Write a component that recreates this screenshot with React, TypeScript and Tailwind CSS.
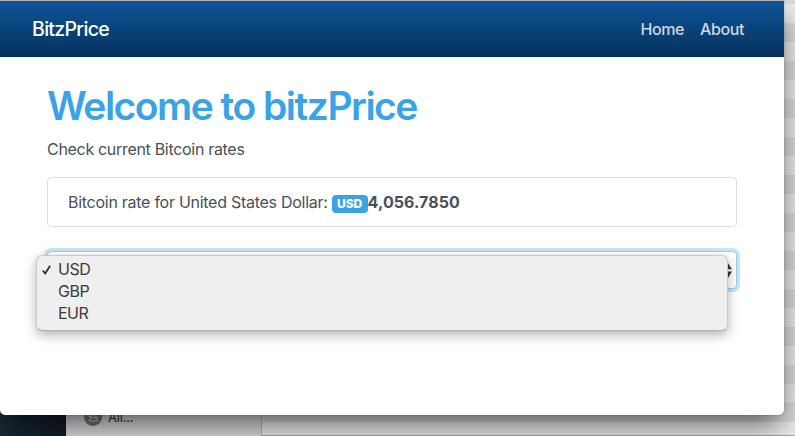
const options = ['USD', 'GBP', 'EUR'];

function Desktop() {
  return (
    <div className="absolute inset-0 flex bg-[#e3e3e3]">
      <div className="w-[66px] bg-[linear-gradient(to_right,#182c36,#121b26)]" />
      <div className="flex w-[195px] items-end bg-[#dedede] pb-[6px]">
        <div className="flex h-[27px] items-center gap-[6px] pl-[18px]">
          <svg width="18" height="18" viewBox="0 0 18 18">
            <circle cx="9" cy="9" r="9" fill="#747474" />
            <path
              d="M3 7l5 3 6-1M9 4l-4 9M9 4l5 9M5 13h9M4 5l3 2"
              fill="none"
              stroke="#d0d0d0"
              strokeWidth="1"
            />
          </svg>
          <span className="text-[13px] leading-[18px] tracking-[-0.2px] text-[#303030]">All...</span>
        </div>
      </div>
      <div className="flex-1 border-l border-[#bababa] border-b border-b-[#a8a8a8] bg-[repeating-linear-gradient(to_bottom,#dedede_0px,#dedede_19px,#eeeeee_19px,#eeeeee_38px)] bg-[position:0_-15px] bg-[size:100%_600px]" />
    </div>
  );
}

function Navbar() {
  return (
    <nav className="flex h-[57px] items-center justify-between border-t border-[#b4b4b4] bg-[linear-gradient(to_bottom,#0d5499,#05325c)] pr-10 pl-8">
      <span className="text-[19.5px] leading-[30px] font-medium tracking-[-0.68px] text-white">BitzPrice</span>
      <div className="flex gap-4 text-[16px] leading-6 font-medium tracking-[-0.4px] text-[#cbd7e2]">
        <span>Home</span>
        <span>About</span>
      </div>
    </nav>
  );
}

function CurrencySelect() {
  return (
    <div className="relative mt-6 h-[38px] w-[690px] rounded-[4px] border border-[#98cff1] bg-white shadow-[0_0_0_3px_#c8e4f6]">
      <svg className="absolute top-[11px] right-[4px]" width="8" height="15" viewBox="0 0 8 15">
        <path d="M0 6.2 4 0l4 6.2zM0 8.5h8L4 15z" fill="#343a40" />
      </svg>
      <div className="absolute top-[3px] -left-[12px] h-[76px] w-[692px] rounded-[6px] border border-[#c9c9c9] border-b-[#b0b0b0] bg-[#efefef] pt-[2px] shadow-[0_4px_12px_rgba(0,0,0,0.3)]">
        {options.map((option, index) => (
          <div key={option} className="flex h-[22px] items-center pl-[5px]">
            <span className="flex w-4 pt-[2px]">
              {index === 0 && (
                <svg width="9" height="10" viewBox="0 0 9 10">
                  <path d="M.8 5.5 3.2 8.4 8.1.8" fill="none" stroke="#303030" strokeWidth="1.8" />
                </svg>
              )}
            </span>
            <span className="text-[16px] tracking-[-0.5px] text-[#3b3b3b]">{option}</span>
          </div>
        ))}
      </div>
    </div>
  );
}

export default function App() {
  return (
    <div className="relative h-[436px] w-[795px] overflow-hidden font-['Inter','Liberation_Sans',sans-serif]">
      <Desktop />
      <div className="absolute top-0 left-0 h-[415px] w-[784px] rounded-b-[5px] bg-white shadow-[0_0_1px_rgba(0,0,0,0.65),0_14px_32px_rgba(0,0,0,0.38),0_12px_22px_-8px_rgba(0,0,0,0.34)]">
        <Navbar />
        <main className="pl-[47px] text-[#495057]">
          <h1 className="pt-[25px] text-[39px] leading-[48px] font-[560] tracking-[-1.5px] text-[#3aa3e6]">
            Welcome to bitzPrice
          </h1>
          <p className="mt-[7px] text-[16px] leading-6 tracking-[-0.31px]">Check current Bitcoin rates</p>
          <div className="mt-4 flex h-[50px] w-[690px] items-center rounded-[4px] border border-[#dedfe0] px-5 text-[16px]">
            <span className="tracking-[-0.27px]">Bitcoin rate for United States Dollar:</span>
            <span className="mt-[3px] ml-1 flex h-[18px] w-9 items-center justify-center rounded-[4px] bg-[#3aa3e6] text-[12px] font-extrabold text-white">
              USD
            </span>
            <strong className="font-bold tracking-[0.08px]">4,056.7850</strong>
          </div>
          <CurrencySelect />
        </main>
      </div>
    </div>
  );
}
